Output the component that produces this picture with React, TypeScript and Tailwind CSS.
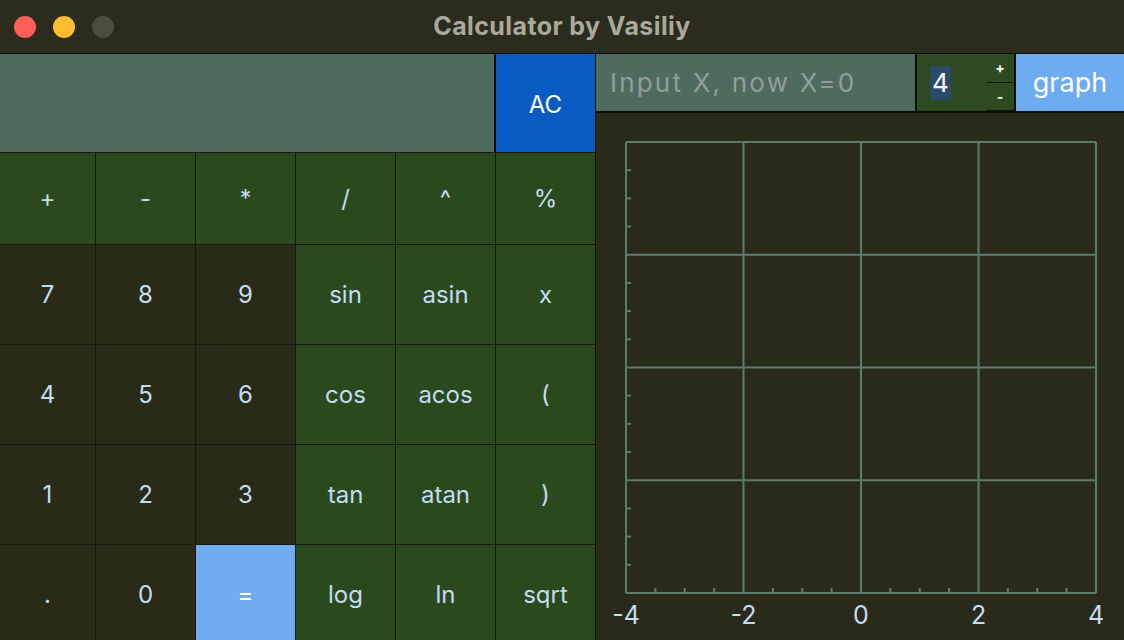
import React from "react";

const font = { fontFamily: '"Inter", "Liberation Sans", sans-serif' };

type Key = { label: string; tone: "op" | "num" | "eq" };

const rows: Key[][] = [
  [
    { label: "+", tone: "op" },
    { label: "-", tone: "op" },
    { label: "*", tone: "op" },
    { label: "/", tone: "op" },
    { label: "^", tone: "op" },
    { label: "%", tone: "op" },
  ],
  [
    { label: "7", tone: "num" },
    { label: "8", tone: "num" },
    { label: "9", tone: "num" },
    { label: "sin", tone: "op" },
    { label: "asin", tone: "op" },
    { label: "x", tone: "op" },
  ],
  [
    { label: "4", tone: "num" },
    { label: "5", tone: "num" },
    { label: "6", tone: "num" },
    { label: "cos", tone: "op" },
    { label: "acos", tone: "op" },
    { label: "(", tone: "op" },
  ],
  [
    { label: "1", tone: "num" },
    { label: "2", tone: "num" },
    { label: "3", tone: "num" },
    { label: "tan", tone: "op" },
    { label: "atan", tone: "op" },
    { label: ")", tone: "op" },
  ],
  [
    { label: ".", tone: "num" },
    { label: "0", tone: "num" },
    { label: "=", tone: "eq" },
    { label: "log", tone: "op" },
    { label: "ln", tone: "op" },
    { label: "sqrt", tone: "op" },
  ],
];

const toneClass = {
  op: "bg-[#2a4a1e] text-[#c4dcf2]",
  num: "bg-[#2a2a18] text-[#c4dcf2]",
  eq: "bg-[#70acf0] text-white",
};

const Keypad = () => (
  <div className="grid grid-cols-[95px_99px_99px_99px_99px_99px] grid-rows-[91px_99px_99px_99px_99px] gap-px bg-[#17170e]">
    {rows.flat().map((k, i) => (
      <button
        key={i}
        className={`flex items-center justify-center text-[24px] ${toneClass[k.tone]}`}
      >
        {k.label}
      </button>
    ))}
  </div>
);

const Plot = () => {
  const x0 = 30;
  const x1 = 500;
  const y0 = 29;
  const y1 = 480;
  const majorX = [0, 1, 2, 3, 4].map((i) => x0 + ((x1 - x0) * i) / 4);
  const majorY = [0, 1, 2, 3, 4].map((i) => y0 + ((y1 - y0) * i) / 4);
  const minorX: number[] = [];
  const minorY: number[] = [];
  for (let i = 0; i < 4; i++) {
    for (let j = 1; j < 4; j++) {
      minorX.push(x0 + ((x1 - x0) * (i + j / 4)) / 4);
      minorY.push(y0 + ((y1 - y0) * (i + j / 4)) / 4);
    }
  }
  const labels = ["-4", "-2", "0", "2", "4"];
  return (
    <svg width="528" height="527" className="block">
      {majorX.map((x) => (
        <line key={"vx" + x} x1={x} y1={y0} x2={x} y2={y1} stroke="#5d7c6c" strokeWidth="2" />
      ))}
      {majorY.map((y) => (
        <line key={"hy" + y} x1={x0} y1={y} x2={x1} y2={y} stroke="#5d7c6c" strokeWidth="2" />
      ))}
      {minorX.map((x) => (
        <line key={"mx" + x} x1={x} y1={y1} x2={x} y2={y1 - 5} stroke="#5d7c6c" strokeWidth="2" />
      ))}
      {minorY.map((y) => (
        <line key={"my" + y} x1={x0} y1={y} x2={x0 + 5} y2={y} stroke="#5d7c6c" strokeWidth="2" />
      ))}
      {majorX.map((x, i) => (
        <text
          key={"l" + x}
          x={x}
          y={511}
          textAnchor="middle"
          fill="#c8ddf2"
          fontSize="25"
          style={font}
        >
          {labels[i]}
        </text>
      ))}
    </svg>
  );
};

export default function App() {
  return (
    <div className="w-[1124px] h-[640px] overflow-hidden bg-[#2a2a1a] flex flex-col" style={font}>
      <div className="h-[54px] shrink-0 bg-[#2c2c1e] border-b border-[#0c0c08] flex items-center relative">
        <div className="flex gap-[17px] pl-[14px]">
          <span className="w-[22px] h-[22px] rounded-full bg-[#fe5f57]" />
          <span className="w-[22px] h-[22px] rounded-full bg-[#febc2e]" />
          <span className="w-[22px] h-[22px] rounded-full bg-[#4d4d3e]" />
        </div>
        <div className="absolute left-0 right-0 text-center text-[25px] font-bold text-[#a9aa9c] tracking-[0.4px] pointer-events-none">
          Calculator by Vasiliy
        </div>
      </div>
      <div className="flex flex-1 min-h-0">
        <div className="w-[595px] shrink-0 flex flex-col bg-[#17170e] gap-px">
          <div className="flex h-[98px] shrink-0 gap-[2px] bg-[#0c0c08]">
            <div className="w-[494px] bg-[#4e6b5c]" />
            <button className="flex-1 bg-[#0a5ac4] text-white text-[24px] flex items-center justify-center pt-[4px]">
              AC
            </button>
          </div>
          <Keypad />
        </div>
        <div className="flex-1 flex flex-col border-l border-[#0c0c08]">
          <div className="flex h-[59px] shrink-0 bg-[#0c0c08] gap-[2px] pb-[2px]">
            <div className="w-[319px] bg-[#4f6b5e] flex items-center pl-[14px] text-[26px] text-[#909f9b] tracking-[2.2px]">
              Input X, now X=0
            </div>
            <div className="w-[97px] bg-[#2e4a20] flex items-center">
              <span className="ml-[13px] px-[2px] bg-[#2a4a68] text-white text-[26px] leading-[34px]">4</span>
              <div className="ml-auto w-[28px] h-full flex flex-col text-white text-[14px] font-bold">
                <div className="flex-1 flex items-center justify-center border-b border-[#14140c]">+</div>
                <div className="flex-1 flex items-center justify-center border-b border-[#14140c]">-</div>
              </div>
            </div>
            <button className="flex-1 bg-[#6eacf2] text-white text-[27px] flex items-center justify-center pt-[1px]">
              graph
            </button>
          </div>
          <div className="flex-1">
            <Plot />
          </div>
        </div>
      </div>
    </div>
  );
}
